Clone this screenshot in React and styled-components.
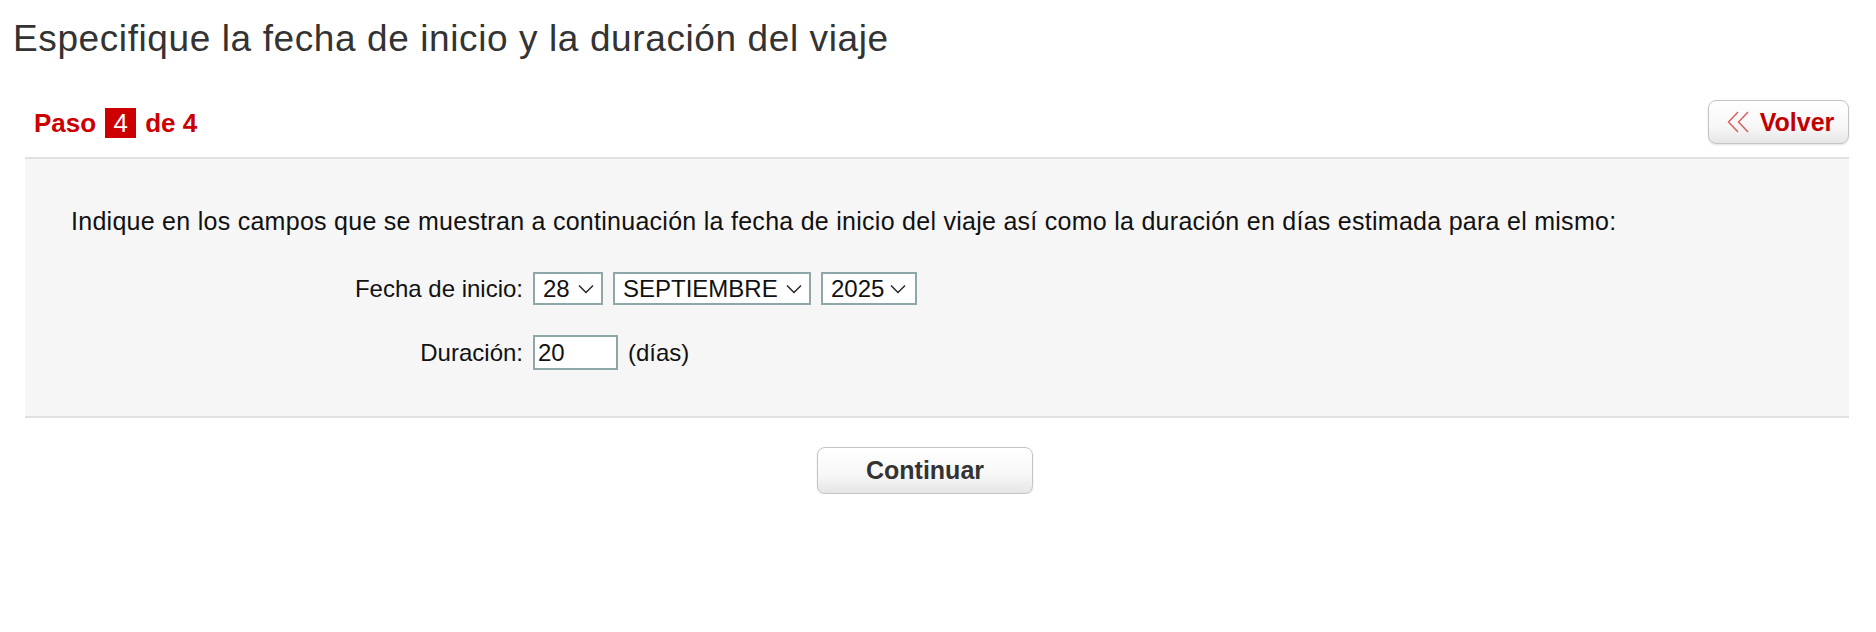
import React from "react";
import styled, { createGlobalStyle } from "styled-components";

const GlobalStyle = createGlobalStyle`
  html, body { margin: 0; padding: 0; background: #fff; }
  body { font-family: "Liberation Sans", Arial, Helvetica, sans-serif; color: #111; }
`;

const Page = styled.div`
  padding: 19px 27px 0 0;
`;

const Title = styled.h1`
  margin: 0 0 0 13px;
  font-size: 37px;
  line-height: 40px;
  letter-spacing: 0.6px;
  font-weight: normal;
  color: #333;
`;

const Content = styled.div`
  margin: 41px 0 0 25px;
`;

const StepBar = styled.div`
  display: flex;
  align-items: center;
  justify-content: space-between;
  padding: 0 0 13px 9px;
  border-bottom: 2px solid #e1e1e1;
`;

const StepText = styled.div`
  font-size: 26px;
  font-weight: bold;
  color: #cc0000;
  display: flex;
  align-items: center;
  gap: 9px;
  margin-top: 2px;
`;

const StepBox = styled.span`
  display: inline-flex;
  align-items: center;
  justify-content: center;
  width: 31px;
  height: 30px;
  background: #cc0000;
  color: #fff;
  font-weight: normal;
  font-size: 26px;
`;

const Button = styled.button`
  display: inline-flex;
  align-items: center;
  justify-content: center;
  box-sizing: border-box;
  font-family: "Liberation Sans", Arial, Helvetica, sans-serif;
  font-weight: bold;
  font-size: 25px;
  border: 1.5px solid #c4c4c4;
  border-radius: 8px;
  background: linear-gradient(#ffffff 0%, #f7f7f7 60%, #e6e6e6 100%);
  box-shadow: 0 1px 2px rgba(0, 0, 0, 0.12);
  cursor: pointer;
  width: ${(p) => p.$w}px;
  height: ${(p) => p.$h}px;
  color: ${(p) => p.$color};
  gap: ${(p) => p.$gap || 0}px;
  padding: ${(p) => p.$pad || "0"};
`;

const Panel = styled.div`
  background: #f6f6f6;
  padding: 48px 0 46px 46px;
  border-bottom: 2px solid #e1e1e1;
`;

const Intro = styled.p`
  margin: 0 0 36px;
  font-size: 25px;
  line-height: 29px;
  letter-spacing: 0.27px;
  color: #111;
`;

const Form = styled.div`
  display: grid;
  grid-template-columns: 452px auto;
  column-gap: 10px;
  row-gap: 30px;
  align-items: center;
  font-size: 24px;
`;

const Label = styled.label`
  text-align: right;
  color: #111;
`;

const Fields = styled.div`
  display: flex;
  align-items: center;
  gap: 10px;
`;

const SelectBox = styled.div`
  display: inline-flex;
  align-items: center;
  box-sizing: border-box;
  height: 33px;
  width: ${(p) => p.$w}px;
  border: 2px solid #8ea7a9;
  background: #fff;
`;

const NativeSelect = styled.select`
  appearance: none;
  -webkit-appearance: none;
  border: none;
  outline: none;
  background: transparent;
  font-family: "Liberation Sans", Arial, Helvetica, sans-serif;
  font-size: 24px;
  color: #111;
  padding: 0 0 0 8px;
  margin: 0;
  flex: 1;
  min-width: 0;
  height: 100%;
`;

const Chevron = styled.svg`
  flex: none;
  margin-right: ${(p) => p.$mr}px;
  pointer-events: none;
`;

const TextInput = styled.input`
  box-sizing: border-box;
  width: 85px;
  height: 35px;
  border: 2px solid #8ea7a9;
  background: #fff;
  font-family: "Liberation Sans", Arial, Helvetica, sans-serif;
  font-size: 24px;
  color: #111;
  padding: 0 0 0 3px;
  outline: none;
`;

const Unit = styled.span`
  color: #111;
`;

const Actions = styled.div`
  display: flex;
  justify-content: center;
  padding: 29px 24px 0 0;
`;

const Select = ({ w, value, options, mr = 8 }) => (
  <SelectBox $w={w}>
    <NativeSelect defaultValue={value}>
      {options.map((o) => (
        <option key={o}>{o}</option>
      ))}
    </NativeSelect>
    <Chevron $mr={mr} width="16" height="10" viewBox="0 0 16 10">
      <path d="M1 1.5 L8 8.5 L15 1.5" fill="none" stroke="#222" strokeWidth="1.4" />
    </Chevron>
  </SelectBox>
);

const DoubleChevron = () => (
  <svg width="23" height="22" viewBox="0 0 23 22">
    <path d="M11 1 L1.5 11 L11 21" fill="none" stroke="#d9605f" strokeWidth="1.5" />
    <path d="M21 1 L11.5 11 L21 21" fill="none" stroke="#d9605f" strokeWidth="1.5" />
  </svg>
);

const days = Array.from({ length: 31 }, (_, i) => String(i + 1));
const months = [
  "ENERO", "FEBRERO", "MARZO", "ABRIL", "MAYO", "JUNIO", "JULIO",
  "AGOSTO", "SEPTIEMBRE", "OCTUBRE", "NOVIEMBRE", "DICIEMBRE",
];
const years = ["2025", "2026", "2027"];

export default function App() {
  return (
    <>
      <GlobalStyle />
      <Page>
        <Title>Especifique la fecha de inicio y la duración del viaje</Title>
        <Content>
          <StepBar>
            <StepText>
              Paso <StepBox>4</StepBox> de 4
            </StepText>
            <Button $w={141} $h={44} $color="#c00000" $gap={10} $pad="0 0 0 4px">
              <DoubleChevron />
              Volver
            </Button>
          </StepBar>
          <Panel>
            <Intro>
              Indique en los campos que se muestran a continuación la fecha de inicio del viaje así
              como la duración en días estimada para el mismo:
            </Intro>
            <Form>
              <Label>Fecha de inicio:</Label>
              <Fields>
                <Select w={70} value="28" options={days} mr={7} />
                <Select w={198} value="SEPTIEMBRE" options={months} mr={7} />
                <Select w={96} value="2025" options={years} mr={9} />
              </Fields>
              <Label>Duración:</Label>
              <Fields>
                <TextInput defaultValue="20" />
                <Unit>(días)</Unit>
              </Fields>
            </Form>
          </Panel>
          <Actions>
            <Button $w={216} $h={47} $color="#333">Continuar</Button>
          </Actions>
        </Content>
      </Page>
    </>
  );
}
